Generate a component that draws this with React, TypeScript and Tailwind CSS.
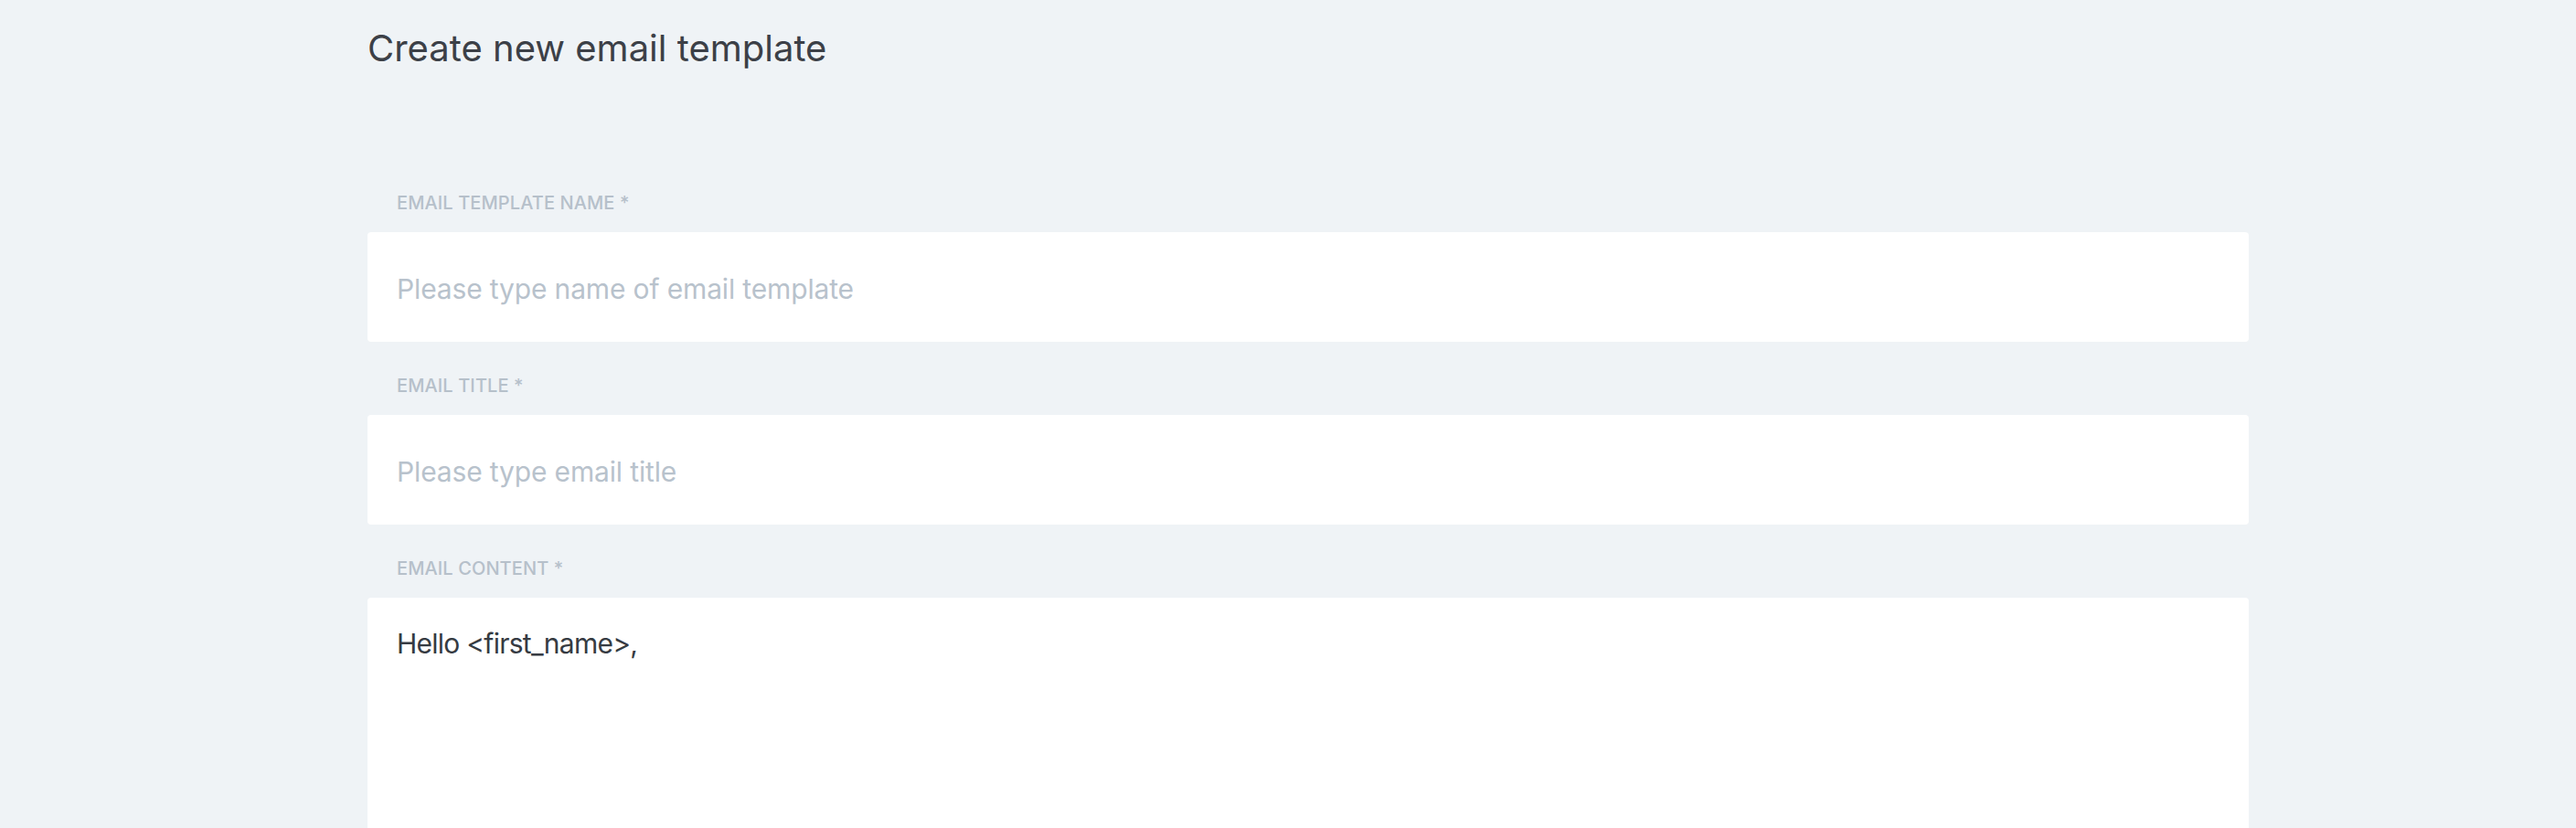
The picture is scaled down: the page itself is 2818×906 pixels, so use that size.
import { useState } from 'react';

const font = { fontFamily: 'Inter, "Noto Sans", sans-serif' };

function Field({ label, children }: { label: string; children: React.ReactNode }) {
  return (
    <div className="flex flex-col">
      <label className="pl-[32px] text-[20px] leading-[24px] font-medium text-[#b6c0ca] tracking-[0.005em] mb-[20px]">
        {label}
      </label>
      {children}
    </div>
  );
}

export default function App() {
  const [name, setName] = useState('');
  const [title, setTitle] = useState('');
  const [content, setContent] = useState('Hello <first_name>,');

  return (
    <div className="h-screen overflow-hidden bg-[#eff3f6]" style={font}>
      <div className="w-[2058px] ml-[402px] pt-[29px]">
        <h1 className="text-[40px] leading-[48px] font-normal text-[#3c4047]">
          Create new email template
        </h1>

        <div className="mt-[133px] flex flex-col gap-[36px]">
          <Field label="EMAIL TEMPLATE NAME *">
            <input
              value={name}
              onChange={e => setName(e.target.value)}
              placeholder="Please type name of email template"
              className="h-[120px] w-full rounded-[4px] bg-white px-[32px] pt-[4px] text-[30px] tracking-[-0.005em] text-[#363b42] outline-none placeholder:text-[#b8c2cc]"
            />
          </Field>

          <Field label="EMAIL TITLE *">
            <input
              value={title}
              onChange={e => setTitle(e.target.value)}
              placeholder="Please type email title"
              className="h-[120px] w-full rounded-[4px] bg-white px-[32px] pt-[4px] text-[30px] tracking-[-0.005em] text-[#363b42] outline-none placeholder:text-[#b8c2cc]"
            />
          </Field>

          <Field label="EMAIL CONTENT *">
            <textarea
              value={content}
              onChange={e => setContent(e.target.value)}
              className="h-[500px] w-full resize-none rounded-[4px] bg-white p-[32px] text-[30px] leading-[36px] tracking-[-0.025em] text-[#363b42] outline-none"
            />
          </Field>
        </div>
      </div>
    </div>
  );
}
